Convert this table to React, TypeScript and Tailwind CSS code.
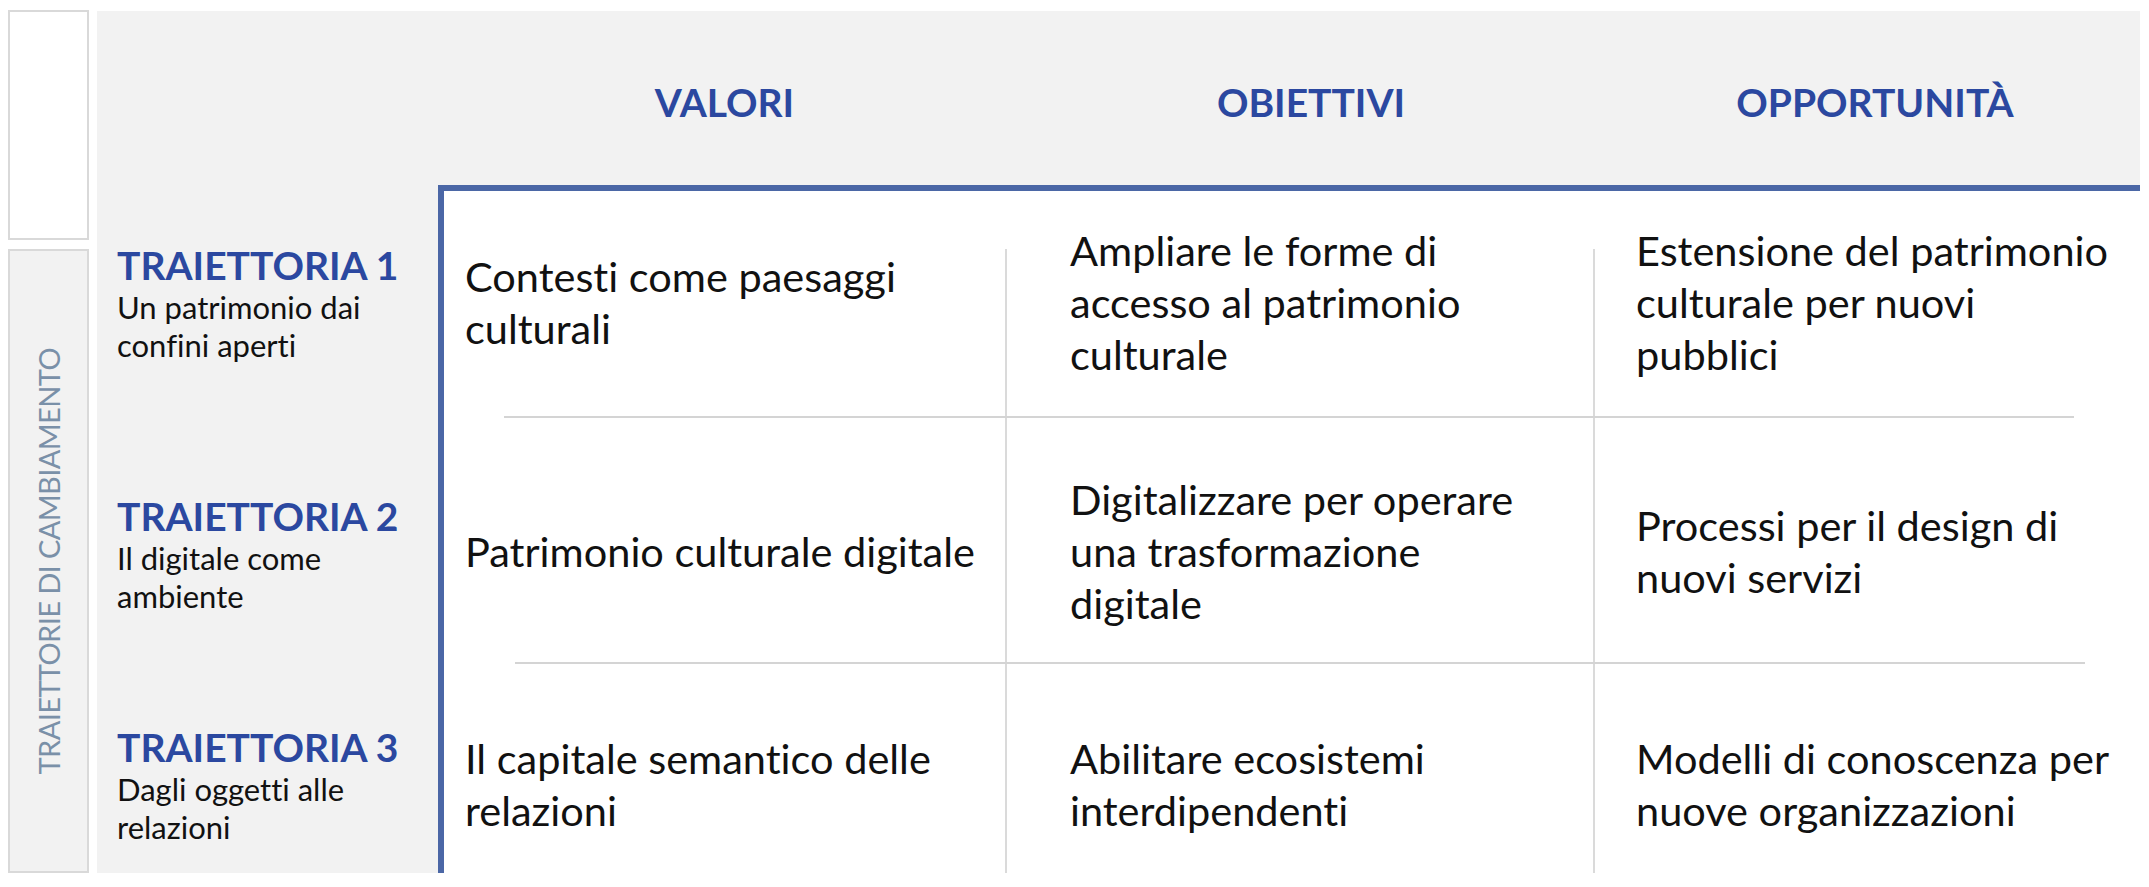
import React from "react";

const rows = [
  {
    title: "TRAIETTORIA 1",
    sub: ["Un patrimonio dai", "confini aperti"],
    cells: [
      ["Contesti come paesaggi", "culturali"],
      ["Ampliare le forme di", "accesso al patrimonio", "culturale"],
      ["Estensione del patrimonio", "culturale per nuovi", "pubblici"],
    ],
  },
  {
    title: "TRAIETTORIA 2",
    sub: ["Il digitale come", "ambiente"],
    cells: [
      ["Patrimonio culturale digitale"],
      ["Digitalizzare per operare", "una trasformazione", "digitale"],
      ["Processi per il design di", "nuovi servizi"],
    ],
  },
  {
    title: "TRAIETTORIA 3",
    sub: ["Dagli oggetti alle", "relazioni"],
    cells: [
      ["Il capitale semantico delle", "relazioni"],
      ["Abilitare ecosistemi", "interdipendenti"],
      ["Modelli di conoscenza per", "nuove organizzazioni"],
    ],
  },
];

// per-row tweaks so text sits where the slide puts it
const rowBox = [
  { left: "h-[231px] pt-[8px] pb-[4px]", right: "h-[225px] pb-[4px]" },
  { left: "h-[244px] pt-[31px]", right: "h-[244px] pt-[22px]" },
  { left: "h-[209px] pt-[40px]", right: "h-[209px] pt-[31px]" },
];

const lineInset = [
  ["ml-[60px]", "", "mr-[66px]"],
  ["ml-[71px]", "", "mr-[55px]"],
];

function Lines({ lines }: { lines: string[] }) {
  return (
    <div className="text-[41.5px] leading-[52px] text-[#111] whitespace-nowrap">
      {lines.map((l) => (
        <div key={l}>{l}</div>
      ))}
    </div>
  );
}

export default function App() {
  return (
    <div className="w-[2149px] h-[887px] bg-white font-['Lato',sans-serif] [font-variant-ligatures:none] overflow-hidden">
      <div className="flex pt-[10px] pl-[8px] gap-[8px]">
        {/* left strip */}
        <div className="flex flex-col gap-[9px] w-[81px]">
          <div className="h-[230px] border-2 border-[#d9d9d9] bg-white" />
          <div className="h-[624px] border-2 border-[#d9d9d9] bg-[#f2f2f2] flex items-center justify-center">
            <span className="[writing-mode:vertical-rl] rotate-180 text-[29px] text-[#7a90a8] whitespace-nowrap tracking-[-0.6px]">
              TRAIETTORIE DI CAMBIAMENTO
            </span>
          </div>
        </div>

        {/* main panel */}
        <div className="mt-[1px] w-[2043px] h-[862px] bg-[#f2f2f2] flex flex-col">
          {/* header */}
          <div className="h-[178px] pl-[347px] pt-[8px] grid grid-cols-[561px_612px_516px] items-center">
            {["VALORI", "OBIETTIVI", "OPPORTUNITÀ"].map((h) => (
              <div key={h} className="text-center text-[39px] font-bold text-[#2b48a0]">
                {h}
              </div>
            ))}
          </div>

          <div className="flex flex-1">
            {/* row titles */}
            <div className="w-[341px] flex flex-col">
              {rows.map((r, i) => (
                <div key={r.title} className={`${rowBox[i].left} pl-[20px] flex flex-col justify-center`}>
                  <div className="text-[39px] leading-[46px] font-bold text-[#2b48a0]">{r.title}</div>
                  <div className="text-[31px] leading-[38px] text-[#111]">
                    {r.sub.map((s) => (
                      <div key={s}>{s}</div>
                    ))}
                  </div>
                </div>
              ))}
            </div>

            {/* grid */}
            <div className="flex-1 bg-white border-t-[6px] border-l-[6px] border-[#4b67a6] flex flex-col">
              {rows.map((r, i) => (
                <div key={r.title} className="flex flex-col">
                  <div className="grid grid-cols-[561px_588px_547px]">
                    {r.cells.map((c, j) => (
                      <div
                        key={j}
                        className={`${rowBox[i].right} relative flex items-center ${
                          j === 0 ? "pl-[21px]" : j === 1 ? "pl-[65px]" : "pl-[43px]"
                        } ${
                          j > 0
                            ? i === 0
                              ? "before:absolute before:left-0 before:top-[58px] before:bottom-0 before:w-[2px] before:bg-[#dadada]"
                              : "before:absolute before:left-0 before:top-0 before:bottom-0 before:w-[2px] before:bg-[#dadada]"
                            : ""
                        }`}
                      >
                        <Lines lines={c} />
                      </div>
                    ))}
                  </div>
                  {i < 2 && (
                    <div className="grid grid-cols-[561px_588px_547px] h-[2px]">
                      {[0, 1, 2].map((j) => (
                        <div key={j} className={`${lineInset[i][j]} bg-[#d4d4d4]`} />
                      ))}
                    </div>
                  )}
                </div>
              ))}
            </div>
          </div>
        </div>
      </div>
    </div>
  );
}
